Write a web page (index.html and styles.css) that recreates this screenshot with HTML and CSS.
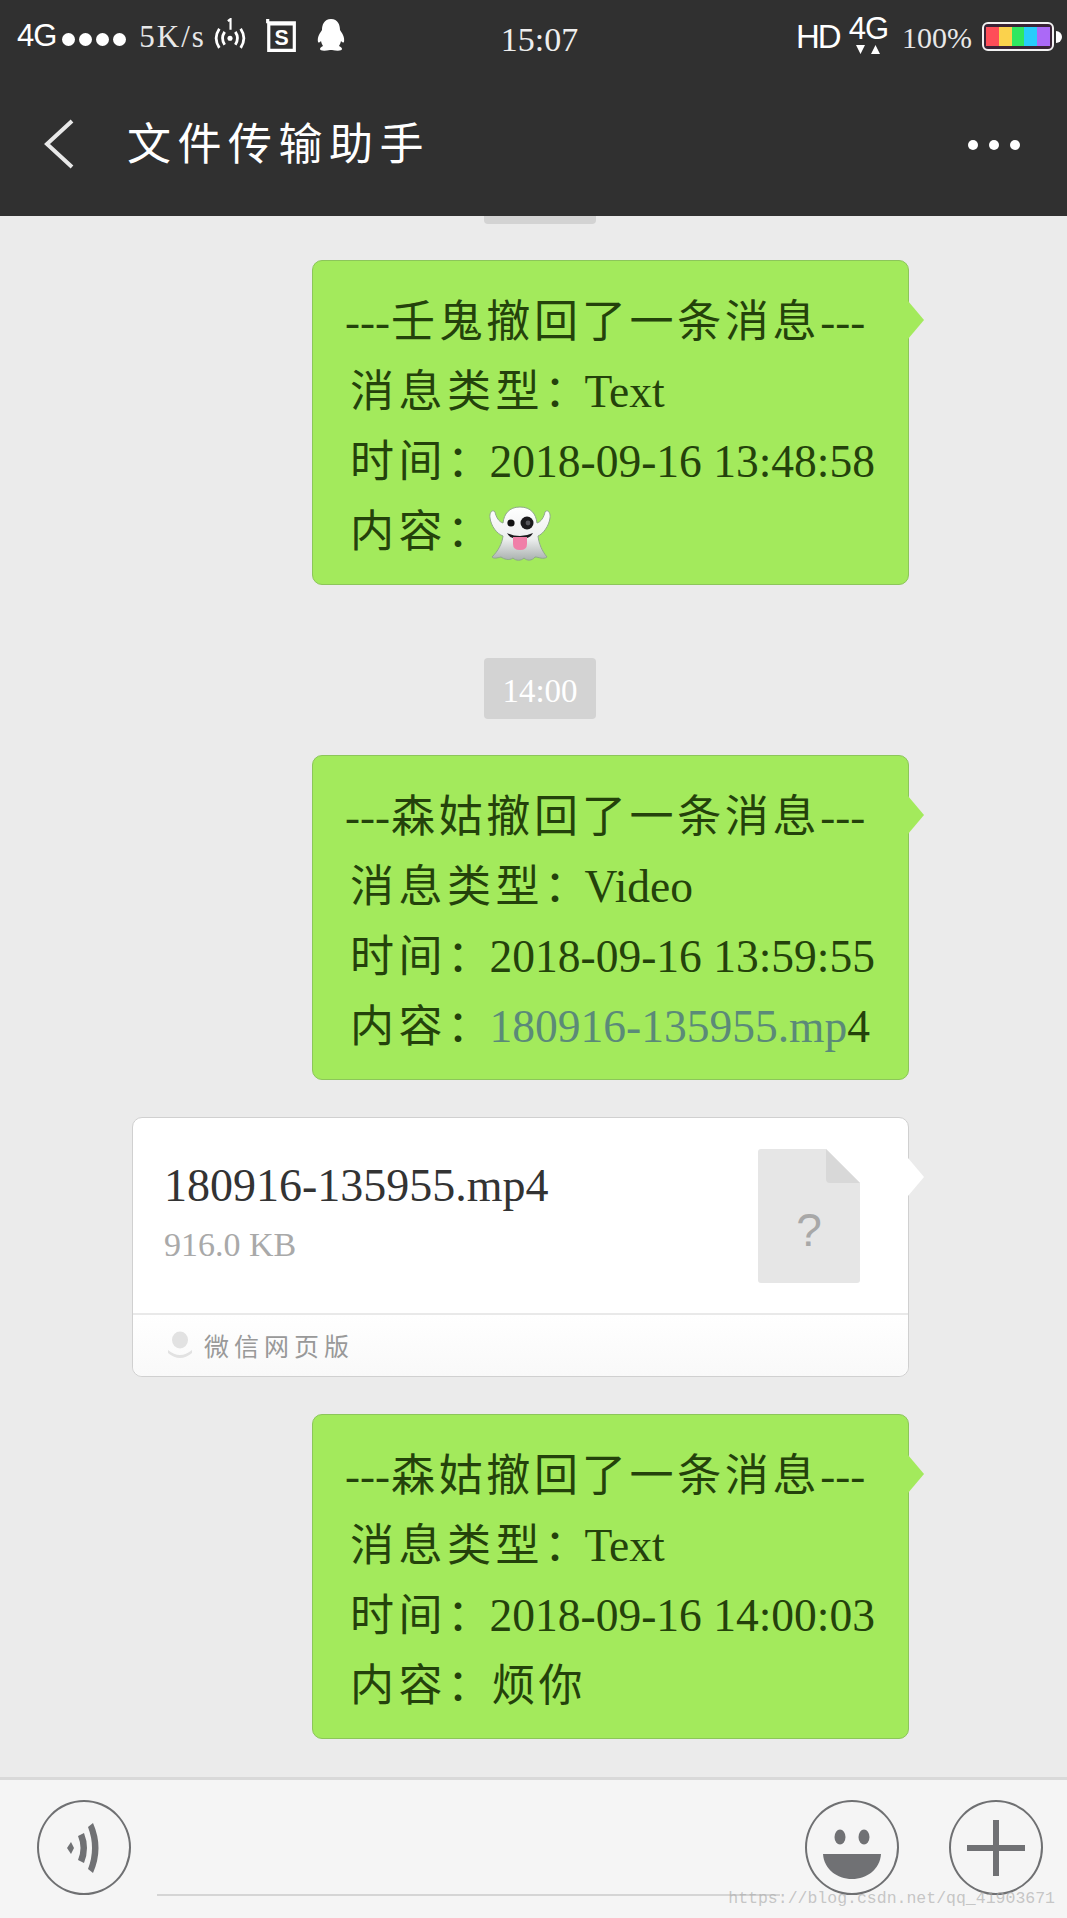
FILE: index.html
```html
<!DOCTYPE html>
<html lang="zh-CN">
<head>
    <meta charset="UTF-8">
    <meta name="viewport" content="width=device-width, initial-scale=1.0">
    <title>文件传输助手</title>
    <link rel="stylesheet" href="styles.css">
</head>
<body>

    <!-- Barra superior -->
    <header class="top">
        <div class="status">
            <div class="status-side">
                <span class="sans net">4G</span>
                <span class="dots"><i></i><i></i><i></i><i></i></span>
                <span class="speed">5K/s</span>
                <svg class="ic-hotspot" width="36" height="32" viewBox="0 0 32 30" fill="none" stroke="#fff" stroke-width="2.6">
                    <path d="M6 10 Q0 19 6 28"/><path d="M26 10 Q32 19 26 28"/>
                    <path d="M11 13 Q7 19 11 25"/><path d="M21 13 Q25 19 21 25"/>
                    <circle cx="16" cy="19" r="2.4" fill="#fff" stroke="none"/>
                    <path d="M14 3 L16.5 1 V11" stroke-width="2"/>
                </svg>
                <svg class="ic-s" width="30" height="33" viewBox="0 0 28 31">
                    <path d="M0 0 H3 V2 H28 V31 H1 V4 H0 Z M4 6 V28 H25 V6 Z" fill="#fff" fill-rule="evenodd"/>
                    <text x="14.5" y="24" text-anchor="middle" class="ic-s-letter">S</text>
                </svg>
                <svg class="ic-qq" width="28" height="32" viewBox="0 0 28 32">
                    <path d="M14 0 C21 0 23 6 23 11 C25 14 28 18 27 23 C26 24 25 23.500 24 22 C23.500 24 23 25.500 22 27 C24 28 25 29 25 30 C25 32 20 32 15 31 H13 C8 32 3 32 3 30 C3 29 4 28 6 27 C5 25.500 4.500 24 4 22 C3 23.500 2 24 1 23 C0 18 3 14 5 11 C5 6 7 0 14 0 Z" fill="#fff"/>
                </svg>
            </div>
            <span class="clock">15:07</span>
            <div class="status-side status-right">
                <span class="sans hd">HD</span>
                <span class="net-up">
                    <span class="sans net">4G</span>
                    <svg width="24" height="9" viewBox="0 0 24 9" fill="#fff"><path d="M0 0 H9 L4.500 9 Z M15 9 L19.500 0 L24 9 Z"/></svg>
                </span>
                <span class="pct">100%</span>
                <span class="battery">
                    <span class="battery-cells"><i class="c1"></i><i class="c2"></i><i class="c3"></i><i class="c4"></i><i class="c5"></i></span>
                </span>
                <span class="battery-nub"></span>
            </div>
        </div>
        <nav class="navbar">
            <svg class="back" width="30" height="50" viewBox="0 0 30 50" fill="none" stroke="#e8e8e8" stroke-width="4"><path d="M28 2 L3 25 L28 48"/></svg>
            <h1 class="title">文件传输助手</h1>
            <span class="more"><i></i><i></i><i></i></span>
        </nav>
    </header>

    <!-- Mensajes -->
    <main class="chat">
        <div class="pill pill-cut"></div>

        <div class="bubble">
            <div class="row head"><span class="dash">---</span>壬鬼撤回了一条消息<span class="dash">---</span></div>
            <div class="row"><span class="lbl lbl-long">消息类型：</span>Text</div>
            <div class="row"><span class="lbl">时间：</span>2018-09-16 13:48:58</div>
            <div class="row"><span class="lbl">内容：</span><svg class="ghost" width="62" height="56" viewBox="0 0 62 56">
                <defs><linearGradient id="gh" x1="0" y1="0" x2="0" y2="1"><stop offset="0" stop-color="#fff"/><stop offset=".6" stop-color="#eceeee"/><stop offset="1" stop-color="#a9b0ae"/></linearGradient></defs>
                <path d="M31 1 C42 1 47 8 48 17 C52 16 55 11 56 6 C58 3 62 6 61 12 C60 20 54 28 49 30 C50 38 53 45 58 51 C54 54 50 51 46 51 C43 55 38 55 35 52 C32 55 27 55 24 52 C20 55 15 53 12 51 C8 52 5 53 3 51 C9 45 13 38 14 30 C8 28 2 20 1 12 C0 6 4 3 6 6 C7 11 10 16 14 17 C15 8 20 1 31 1 Z" fill="url(#gh)" stroke="#8fa98a" stroke-width="1"/>
                <circle cx="22" cy="17" r="3.600" fill="#111"/>
                <circle cx="38" cy="17" r="6.500" fill="#1b1b1d"/>
                <circle cx="39" cy="17" r="2.400" fill="#55555a"/>
                <path d="M18 27 Q31 33 44 27 Q42 31 38 32 H24 Q20 31 18 27 Z" fill="#1b1b1d"/>
                <path d="M24 31 H38 V38 Q38 44 31 44 Q24 44 24 38 Z" fill="#f07fa8"/>
            </svg></div>
        </div>

        <div class="pill">14:00</div>

        <div class="bubble">
            <div class="row head"><span class="dash">---</span>森姑撤回了一条消息<span class="dash">---</span></div>
            <div class="row"><span class="lbl lbl-long">消息类型：</span>Video</div>
            <div class="row"><span class="lbl">时间：</span>2018-09-16 13:59:55</div>
            <div class="row"><span class="lbl">内容：</span><a class="link">180916-135955.mp</a>4</div>
        </div>

        <div class="card">
            <div class="card-body">
                <div class="card-info">
                    <div class="file-name">180916-135955.mp4</div>
                    <div class="file-size">916.0 KB</div>
                </div>
                <svg class="file-icon" width="102" height="134" viewBox="0 0 102 134">
                    <path d="M3 0 H68 L102 34 V131 Q102 134 99 134 H3 Q0 134 0 131 V3 Q0 0 3 0 Z" fill="#e6e6e6"/>
                    <path d="M68 0 L102 34 H72 Q68 34 68 30 Z" fill="#d8d8d8"/>
                    <text x="51" y="97" text-anchor="middle" class="file-q">?</text>
                </svg>
            </div>
            <div class="card-foot">
                <svg width="26" height="28" viewBox="0 0 26 28" fill="#e2e2e2">
                    <ellipse cx="13" cy="9" rx="8" ry="8.500"/>
                    <path d="M1 19 Q13 29 25 19 L25 22 Q13 32 1 22 Z"/>
                </svg>
                <span class="foot-text">微信网页版</span>
            </div>
        </div>

        <div class="bubble">
            <div class="row head"><span class="dash">---</span>森姑撤回了一条消息<span class="dash">---</span></div>
            <div class="row"><span class="lbl lbl-long">消息类型：</span>Text</div>
            <div class="row"><span class="lbl">时间：</span>2018-09-16 14:00:03</div>
            <div class="row"><span class="lbl">内容：</span><span class="cjk">烦你</span></div>
        </div>
    </main>

    <!-- Barra de entrada -->
    <footer class="inputbar">
        <span class="round">
            <svg width="36" height="50" viewBox="0 0 36 50" fill="#707174">
                <path d="M1 25 L5 19 L8 25 L5 31 Z"/>
                <path d="M12 13 L18 10 Q24 25 18 40 L12 37 Q17 25 12 13 Z"/>
                <path d="M22 4 L27 0 Q38 25 27 50 L22 46 Q30 25 22 4 Z"/>
            </svg>
        </span>
        <div class="input-line"></div>
        <span class="round round-emoji">
            <svg width="58" height="54" viewBox="0 0 58 54" fill="#707174">
                <ellipse cx="17" cy="12" rx="5.500" ry="7.500"/>
                <ellipse cx="41" cy="12" rx="5.500" ry="7.500"/>
                <path d="M0 29 H58 C57 44 44 54 29 54 C14 54 1 44 0 29 Z"/>
            </svg>
        </span>
        <span class="round round-plus">
            <svg width="58" height="56" viewBox="0 0 58 56" fill="#707174">
                <path d="M26 0 H32 V25 H58 V31 H32 V56 H26 V31 H0 V25 H26 Z"/>
            </svg>
        </span>
    </footer>

    <span class="watermark">https://blog.csdn.net/qq_41903671</span>

</body>
</html>
```

FILE: styles.css
```css
* {margin: 0; padding: 0; box-sizing: border-box;}

body {
    position: relative;
    width: 1067px;
    height: 1918px;
    overflow: hidden;
    background: #ebebeb;
    font-family: 'Liberation Serif', 'Noto Sans CJK SC', serif;
}

i {display: block;}

.sans {font-family: 'Liberation Sans', sans-serif;}

/* Barra superior */
.top {
    height: 216px;
    background: #303030;
    color: #fff;
}

.status {
    height: 72px;
    padding: 0 5px 0 17px;
    display: flex;
    align-items: center;
}

.status-side {
    flex: 1;
    display: flex;
    align-items: center;
}

.status-right {
    justify-content: flex-end;
}

.net {
    font-size: 31px;
    letter-spacing: -1px;
    line-height: 24px;
}

.dots {
    display: flex;
    gap: 4px;
    margin: 6px 0 0 6px;
}

.dots i {
    width: 13px;
    height: 13px;
    border-radius: 50%;
    background: #fff;
}

.speed {
    font-size: 31px;
    letter-spacing: 2px;
    margin: 2px 0 0 13px;
    color: #e8e8e8;
}

.ic-hotspot {margin: -4px 0 0 6px;}
.ic-s {margin: -2px 0 0 18px;}
.ic-qq {margin: -3px 0 0 21px;}

.ic-s-letter {
    font-family: 'Liberation Sans', sans-serif;
    font-weight: 700;
    font-size: 20px;
    fill: #fff;
}

.clock {
    font-size: 34px;
    color: #eee;
    margin-top: 8px;
}

.hd {
    font-size: 33px;
    letter-spacing: -2px;
    margin-top: 1px;
}

.net-up {
    display: flex;
    flex-direction: column;
    align-items: center;
    gap: 4px;
    margin: -2px 0 0 9px;
}

.pct {
    font-size: 30px;
    color: #e8e8e8;
    margin: 4px 0 0 14px;
}

.battery {
    width: 72px;
    height: 29px;
    border: 2px solid #f2f2f2;
    border-radius: 6px;
    margin: 1px 0 0 10px;
    background: #3a2436;
    padding: 3px 2px;
}

.battery-cells {
    display: flex;
    height: 100%;
}

.battery-cells i {flex: 1;}
.c1 {background: #ff4d58;}
.c2 {background: #fbd24c;}
.c3 {background: #2fe760;}
.c4 {background: #27cdfb;}
.c5 {background: #ab69f7;}

.battery-nub {
    width: 6px;
    height: 12px;
    margin: 1px 0 0 2px;
    background: #fff;
    border-radius: 0 6px 6px 0;
}

.navbar {
    height: 144px;
    padding: 0 47px 0 44px;
    display: flex;
    align-items: center;
}

.back {margin-top: -1px;}

.title {
    flex: 1;
    margin: -6px 0 0 53px;
    font-size: 44px;
    font-weight: 400;
    letter-spacing: 6.500px;
    color: #fff;
}

.more {
    display: flex;
    gap: 11px;
    margin-top: 2px;
}

.more i {
    width: 10px;
    height: 10px;
    border-radius: 50%;
    background: #fff;
}

/* Mensajes */
.chat {
    height: 1561px;
    display: flex;
    flex-direction: column;
    align-items: flex-end;
    padding-right: 158px;
}

.pill {
    flex: none;
    align-self: flex-start;
    margin: 36px 0 36px 484px;
    width: 112px;
    height: 61px;
    background: #d3d3d3;
    border-radius: 4px;
    color: #fff;
    font-size: 33px;
    line-height: 66px;
    text-align: center;
}

.pill-cut {
    height: 8px;
    margin-top: 0;
    border-radius: 0 0 4px 4px;
}

.bubble, .card {
    position: relative;
    flex: none;
}

.bubble::after, .card::after {
    content: "";
    position: absolute;
    top: 40px;
    right: -16px;
    width: 16px;
    height: 38px;
    background: #a3ea5c;
    clip-path: polygon(0 0, 100% 50%, 0 100%);
}

.card::after {background: #fff;}

.bubble {
    width: 597px;
    height: 325px;
    padding: 27px 0 0 32px;
    background: #a3ea5c;
    border: 1px solid #8cc65a;
    border-radius: 10px;
    margin-bottom: 37px;
    font-size: 45.500px;
    line-height: 69px;
    color: #24420b;
    white-space: nowrap;
}

.row {padding-left: 5px;}

.head {
    padding-left: 0;
    font-size: 44px;
    letter-spacing: 3.700px;
}

.dash {
    font-size: 45px;
    letter-spacing: 0;
    margin-right: 1px;
}

.lbl {
    font-size: 44px;
    letter-spacing: 4.500px;
    margin-right: -6px;
}

.lbl-long {margin-right: -8px;}

.cjk {
    font-size: 44px;
    letter-spacing: 3px;
    margin-left: 2px;
}

.ghost {
    vertical-align: middle;
    margin: -6px 0 0 -1px;
}

.link {color: #5b8a78;}

/* Tarjeta de archivo */
.card {
    width: 777px;
    height: 260px;
    margin-bottom: 37px;
    background: #fff;
    border: 1px solid #d0d0d0;
    border-radius: 10px;
}

.card-body {
    height: 195px;
    padding: 31px 48px 0 31px;
    display: flex;
    justify-content: space-between;
}

.file-name {
    font-size: 46px;
    line-height: 52px;
    margin-top: 11px;
    color: #333;
}

.file-size {
    font-size: 34px;
    line-height: 40px;
    margin-top: 13px;
    color: #a9a9a9;
}

.file-q {
    font-family: 'Liberation Sans', sans-serif;
    font-size: 46px;
    fill: #a8a8a8;
}

.card-foot {
    height: 63px;
    border-top: 2px solid #e9e9e9;
    border-radius: 0 0 10px 10px;
    background: linear-gradient(#fff, #f9f9f9);
    padding: 0 0 2px 34px;
    display: flex;
    align-items: center;
    gap: 11px;
}

.foot-text {
    font-size: 25px;
    letter-spacing: 5px;
    color: #999;
}

/* Barra de entrada */
.inputbar {
    height: 141px;
    background: #f5f5f5;
    border-top: 3px solid #d9d9d9;
    padding: 20px 24px 0 37px;
    display: flex;
    align-items: flex-start;
}

.round {
    width: 94px;
    height: 95px;
    border: 2px solid #6f7072;
    border-radius: 50%;
    flex: none;
    display: flex;
    align-items: center;
    justify-content: center;
}

.input-line {
    flex: 1;
    height: 96px;
    margin: 0 25px 0 26px;
    border-bottom: 2px solid #d5d5d5;
}

.round-emoji svg {margin-top: 9px;}
.round-plus {margin-left: 50px;}

.watermark {
    position: absolute;
    right: 12px;
    bottom: 10px;
    font-family: 'Liberation Mono', monospace;
    font-size: 16.500px;
    color: rgba(170, 170, 170, 0.65);
}
```
